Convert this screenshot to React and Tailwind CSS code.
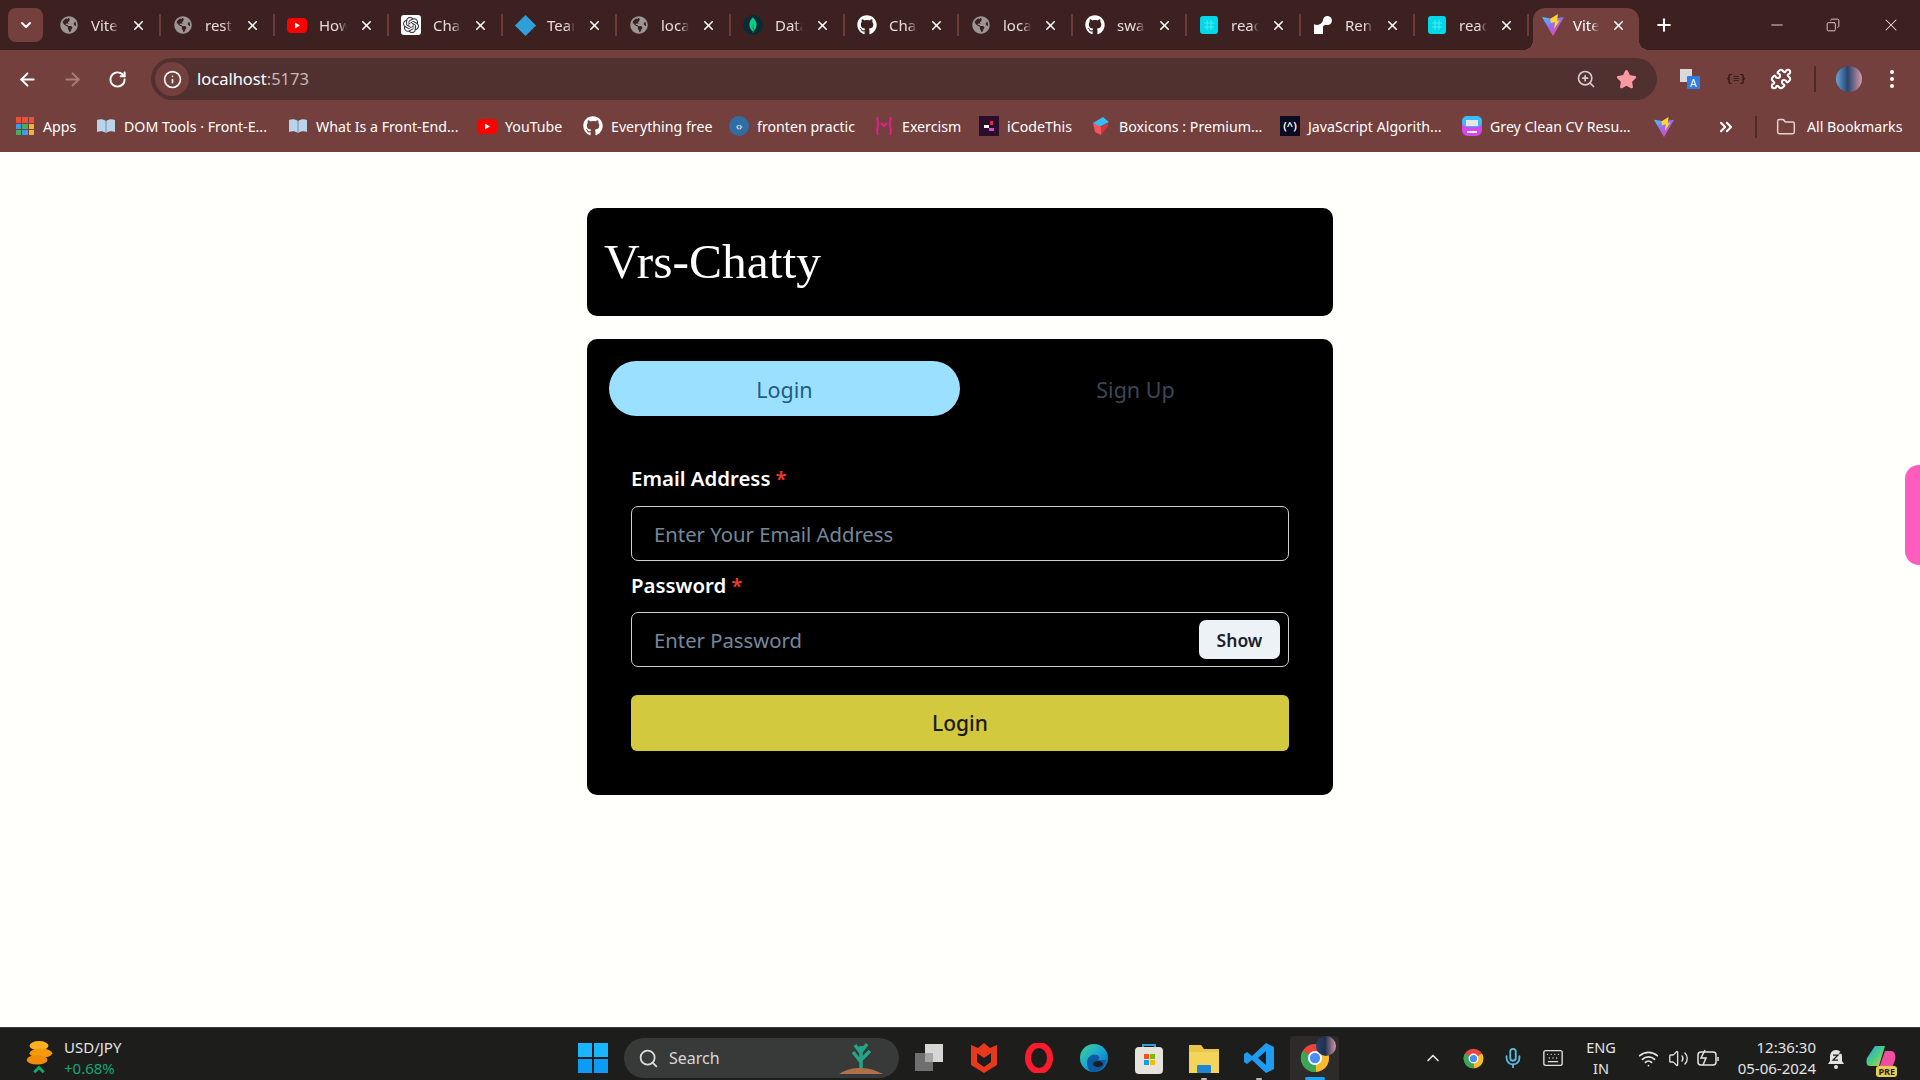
import {
  ArrowLeft,
  ArrowRight,
  RotateCw,
  Info,
  ZoomIn,
  Star,
  Puzzle,
  ChevronDown,
  ChevronUp,
  ChevronsRight,
  Folder,
  Plus,
  Minus,
  X,
  Copy,
  Search,
  Mic,
  Wifi,
  Volume2,
  Keyboard,
} from "lucide-react";
import { FaGithub, FaGlobeAmericas } from "react-icons/fa";
import { SiOpenai, SiMongodb, SiRender } from "react-icons/si";

const Globe = () => <FaGlobeAmericas className="h-[18px] w-[18px] text-[#9b9694]" />;
const Github = ({ size = "h-5 w-5" }) => <FaGithub className={`${size} text-white`} />;

const YouTube = () => (
  <svg viewBox="0 0 20 16" className="h-[17px] w-5">
    <rect width="20" height="15" y="0.5" rx="4" fill="#f00" />
    <path d="M8 5l5 3-5 3z" fill="#fff" />
  </svg>
);

const Vite = ({ size = "h-[24px] w-[24px]" }) => (
  <svg viewBox="0 0 24 24" className={size}>
    <defs>
      <linearGradient id="vitePurple" x1="0" y1="0" x2="0.8" y2="1">
        <stop offset="0" stopColor="#41c8ff" />
        <stop offset="0.5" stopColor="#9a6bf0" />
        <stop offset="1" stopColor="#ff3f9e" />
      </linearGradient>
    </defs>
    <path d="M1 4l11 19L23 4l-6 1-5 1-5-1z" fill="url(#vitePurple)" />
    <path d="M9 6l8-5-1 7 3-1-6 9 1-7-4 1z" fill="#ffd62e" />
  </svg>
);

const ReactTile = () => (
  <svg viewBox="0 0 18 18" className="h-[18px] w-[18px]">
    <rect width="18" height="18" rx="3" fill="#00d8e8" />
    <path d="M7 4v10M11 4v10M4 7h10M4 11h10" stroke="#4de9f3" strokeWidth="1" />
  </svg>
);

const ChromeLogo = ({ size = "h-[30px] w-[30px]" }) => (
  <svg viewBox="0 0 32 32" className={size}>
    <circle cx="16" cy="16" r="15" fill="#e8453c" />
    <path d="M16 16L29 8.5a15 15 0 0 1-12 22.5z" fill="#f5bb2c" />
    <path d="M16 16l1 15A15 15 0 0 1 3 8.5z" fill="#3aa757" />
    <circle cx="16" cy="16" r="6.5" fill="#4a8df6" stroke="#fff" strokeWidth="2" />
  </svg>
);

const tabs = [
  { title: "Vite", icon: <Globe /> },
  { title: "rest", icon: <Globe /> },
  { title: "How", icon: <YouTube /> },
  {
    title: "Cha",
    icon: (
      <span className="flex h-5 w-5 items-center justify-center rounded-[3px] bg-white">
        <SiOpenai className="h-4 w-4 text-[#333]" />
      </span>
    ),
  },
  {
    title: "Tear",
    icon: <span className="h-[15px] w-[15px] rotate-45 bg-[#2f9fd8]" />,
  },
  { title: "loca", icon: <Globe /> },
  {
    title: "Data",
    icon: (
      <span className="flex h-5 w-5 items-center justify-center rounded-full bg-[#0b2a33]">
        <SiMongodb className="h-4 w-4 text-[#13c98a]" />
      </span>
    ),
  },
  { title: "Cha", icon: <Github /> },
  { title: "loca", icon: <Globe /> },
  { title: "swa", icon: <Github /> },
  { title: "reac", icon: <ReactTile /> },
  { title: "Ren", icon: <SiRender className="h-[18px] w-[18px] text-white" /> },
  { title: "reac", icon: <ReactTile /> },
];

const BookIcon = () => (
  <svg viewBox="0 0 20 16" className="h-4 w-5">
    <path d="M1 2c3-1 6-1 9 1 3-2 6-2 9-1v12c-3-1-6-1-9 1-3-2-6-2-9-1z" fill="#b9d3e8" />
    <path d="M10 3v12" stroke="#6d8fae" strokeWidth="1" />
  </svg>
);

const AppsIcon = () => (
  <span className="grid h-[18px] w-[18px] grid-cols-3 gap-px">
    <i className="bg-[#e8503a]" />
    <i className="bg-[#e8503a]" />
    <i className="bg-[#e8503a]" />
    <i className="bg-[#3a9be8]" />
    <i className="bg-[#43b05c]" />
    <i className="bg-[#f2b233]" />
    <i className="bg-[#43b05c]" />
    <i className="bg-[#3a9be8]" />
    <i className="bg-[#f2b233]" />
  </span>
);

const bookmarks = [
  { label: "Apps", width: "w-[34px]", icon: <AppsIcon /> },
  { label: "DOM Tools · Front-E...", width: "w-[145px]", icon: <BookIcon /> },
  { label: "What Is a Front-End...", width: "w-[142px]", icon: <BookIcon /> },
  { label: "YouTube", width: "w-[59px]", icon: <YouTube /> },
  { label: "Everything free", width: "w-[99px]", icon: <Github /> },
  {
    label: "fronten practic",
    width: "w-[98px]",
    icon: (
      <span className="flex h-5 w-5 items-center justify-center rounded-full bg-[#2f6ea5] text-[10px] text-white">
        ‹›
      </span>
    ),
  },
  {
    label: "Exercism",
    width: "w-[58px]",
    icon: (
      <svg viewBox="0 0 20 20" className="h-5 w-5" fill="none" stroke="#e0218a" strokeWidth="2">
        <path d="M4 1c-2 3 1 5 0 9s-2 5 0 9M16 1c2 3-1 5 0 9s2 5 0 9M7 7l3 3 3-3" />
      </svg>
    ),
  },
  {
    label: "iCodeThis",
    width: "w-[65px]",
    icon: (
      <svg viewBox="0 0 20 20" className="h-5 w-5">
        <rect width="20" height="20" fill="#2a0d2c" />
        <rect x="5" y="9" width="5" height="3" fill="#f5f5f5" />
        <rect x="11" y="5" width="3" height="4" fill="#f0264c" />
        <rect x="10" y="12" width="5" height="3" fill="#d74bd0" />
      </svg>
    ),
  },
  {
    label: "Boxicons : Premium...",
    width: "w-[142px]",
    icon: (
      <svg viewBox="0 0 20 20" className="h-5 w-5">
        <path d="M2 7l10-6 6 5-10 5z" fill="#38bdf8" />
        <path d="M2 7l8 4v8l-6-3z" fill="#f2555a" />
        <path d="M10 11l7-4v3l-7 9z" fill="#d9333f" />
      </svg>
    ),
  },
  {
    label: "JavaScript Algorith...",
    width: "w-[135px]",
    icon: (
      <span className="flex h-5 w-5 items-center justify-center bg-[#0a0a23] text-[11px] font-semibold text-white">
        (^)
      </span>
    ),
  },
  {
    label: "Grey Clean CV Resu...",
    width: "w-[142px]",
    icon: (
      <svg viewBox="0 0 20 20" className="h-5 w-5">
        <rect width="20" height="20" rx="6" fill="#d946ef" />
        <rect width="20" height="11" rx="5" fill="#38bdf8" />
        <rect x="4" y="4" width="12" height="6" fill="#e5e7eb" />
        <rect x="5" y="15" width="10" height="2" fill="#fff" />
      </svg>
    ),
  },
];

function Tab({ title, icon }) {
  return (
    <div className="relative flex h-[42px] w-[114px] shrink-0 items-center pb-2">
      <span className="flex w-11 shrink-0 items-center justify-center">{icon}</span>
      <span className="w-[28px] overflow-hidden whitespace-nowrap text-[15px] text-[#e8dcdb] [mask-image:linear-gradient(to_right,black_70%,transparent)]">
        {title}
      </span>
      <X className="ml-[12px] h-[15px] w-[15px] text-white" strokeWidth={2.5} />
      <span className="absolute right-0 top-[6px] h-[22px] w-[2px] bg-[#6d3c3a]" />
    </div>
  );
}

function TabStrip() {
  return (
    <div className="flex h-[50px] shrink-0 items-end bg-[#3d2120]">
      <div className="mb-2 ml-2 mr-[4px] flex h-[34px] w-[35px] shrink-0 items-center justify-center rounded-lg bg-[#74403e]">
        <ChevronDown className="h-4 w-4 text-white" strokeWidth={3} />
      </div>
      <div className="flex h-[42px] items-center">
        {tabs.map((t, i) => (
          <Tab key={i} title={t.title} icon={t.icon} />
        ))}
      </div>
      <div className="relative ml-[4px] flex h-[42px] w-[106px] shrink-0 items-center rounded-t-xl bg-[#74403e] pb-2">
        <span className="absolute bottom-0 left-[-10px] h-[10px] w-[10px] bg-[radial-gradient(circle_at_0_0,transparent_10px,#74403e_10px)]" />
        <span className="absolute bottom-0 right-[-10px] h-[10px] w-[10px] bg-[radial-gradient(circle_at_100%_0,transparent_10px,#74403e_10px)]" />
        <span className="flex w-[40px] shrink-0 items-center justify-center">
          <Vite />
        </span>
        <span className="w-[26px] overflow-hidden whitespace-nowrap text-[15px] text-white [mask-image:linear-gradient(to_right,black_70%,transparent)]">
          Vite
        </span>
        <X className="ml-[12px] h-[15px] w-[15px] text-white" strokeWidth={2.5} />
      </div>
      <div className="flex h-[42px] w-[50px] items-center justify-center pb-2">
        <Plus className="h-5 w-5 text-white" strokeWidth={2.5} />
      </div>
      <div className="flex h-[50px] flex-1 items-center justify-end pr-[19px] text-[#e8dcdb]">
        <Minus className="mr-[40px] h-[18px] w-[18px]" strokeWidth={1.25} />
        <Copy className="mr-[41px] h-[14px] w-[14px] -scale-x-100" strokeWidth={1.5} />
        <X className="h-[20px] w-[20px]" strokeWidth={1.25} />
      </div>
    </div>
  );
}

function Toolbar() {
  return (
    <div className="flex h-[53px] shrink-0 items-center bg-[#74403e] pl-[5px] pt-[5px]">
      <span className="flex w-[45px] justify-center">
        <ArrowLeft className="h-[21px] w-[21px] text-white" strokeWidth={2.25} />
      </span>
      <span className="flex w-[45px] justify-center">
        <ArrowRight className="h-[21px] w-[21px] text-[#a87c7a]" strokeWidth={2.25} />
      </span>
      <span className="flex w-[45px] justify-center">
        <RotateCw className="h-[19px] w-[19px] text-white" strokeWidth={2.5} />
      </span>
      <div className="ml-[11px] flex h-[42px] w-[1506px] items-center rounded-full bg-[#503130] pl-[4px]">
        <span className="flex h-[34px] w-[34px] items-center justify-center rounded-full bg-[#74403e]">
          <Info className="h-[19px] w-[19px] text-white" strokeWidth={2} />
        </span>
        <span className="ml-[8px] text-[16.5px] text-white">
          localhost<span className="text-[#c9b6b5]">:5173</span>
        </span>
        <ZoomIn className="ml-auto h-[20px] w-[20px] text-[#d9c9c8]" strokeWidth={2} />
        <Star className="ml-[20px] mr-[20px] h-[21px] w-[21px] fill-[#fb9aa2] text-[#fb9aa2]" />
      </div>
      <svg viewBox="0 0 22 22" className="ml-[22px] h-[22px] w-[22px] shrink-0">
        <rect x="1" y="1" width="12" height="13" fill="#d9d9d9" />
        <rect x="8" y="8" width="13" height="13" rx="1" fill="#2f7de1" />
        <text x="11" y="19" fontSize="10" fill="#fff" fontFamily="Liberation Sans, sans-serif">
          A
        </text>
      </svg>
      <span className="ml-[25px] w-[20px] text-center font-['Liberation_Mono',monospace] text-[11px] font-bold text-[#2f1a19]">
        {"{≡}"}
      </span>
      <Puzzle className="ml-[24px] h-[22px] w-[22px] text-white" strokeWidth={2.25} />
      <span className="ml-[22px] h-[26px] w-[2px] bg-[#4d2a29]" />
      <span className="ml-[20px] h-[26px] w-[26px] rounded-full bg-[linear-gradient(90deg,#6aa4d8,#27456e_45%,#d79aa8)]" />
      <span className="ml-[28px] flex h-[18px] w-[4px] flex-col justify-between">
        <i className="h-1 w-1 rounded-full bg-white" />
        <i className="h-1 w-1 rounded-full bg-white" />
        <i className="h-1 w-1 rounded-full bg-white" />
      </span>
    </div>
  );
}

function BookmarksBar() {
  return (
    <div className="flex h-[49px] shrink-0 items-center bg-[#74403e] pb-[2px] pl-[15px] text-[14.2px] text-white">
      {bookmarks.map((b) => (
        <div key={b.label} className="mr-[19px] flex shrink-0 items-center">
          <span className="flex w-5 justify-center">{b.icon}</span>
          <span className={`ml-2 whitespace-nowrap ${b.width}`}>{b.label}</span>
        </div>
      ))}
      <Vite size="h-[22px] w-[22px] ml-[2px] shrink-0" />
      <ChevronsRight className="ml-[41px] h-5 w-5 shrink-0" strokeWidth={2.5} />
      <span className="ml-[19px] h-[22px] w-[2px] shrink-0 bg-[#4d2a29]" />
      <Folder className="ml-[19px] h-5 w-5 shrink-0 text-[#e2d3d2]" strokeWidth={1.75} />
      <span className="ml-[11px] whitespace-nowrap">All Bookmarks</span>
    </div>
  );
}

function LoginPage() {
  return (
    <div className="relative flex flex-1 flex-col items-center overflow-hidden bg-[#fffffb] pt-[56px] font-['Noto_Sans',sans-serif]">
      <div className="flex h-[108px] w-[746px] items-center rounded-[10px] bg-black pl-[17px]">
        <h1 className="font-['Liberation_Serif',serif] text-[49.5px] leading-none text-white">Vrs-Chatty</h1>
      </div>

      <div className="mt-[23px] h-[456px] w-[746px] rounded-[10px] bg-black px-[22px] pt-[22px]">
        <div className="flex">
          <button className="h-[55px] flex-1 rounded-full bg-[#9be1ff] pt-[3px] text-[21.5px] text-[#1f5b87]">Login</button>
          <button className="h-[55px] flex-1 pt-[3px] text-[21.5px] text-[#3c4658]">Sign Up</button>
        </div>

        <div className="px-[22px] pt-[49px]">
          <label className="flex h-[28px] items-center pb-[1px] text-[20.4px] font-semibold leading-none text-white">
            Email Address<span className="ml-[5px] text-[#f23a2a]">*</span>
          </label>
          <div className="mt-[13px] flex h-[55px] items-center rounded-[7px] border border-[#cfcfcf] px-[22px] pt-[1px] text-[20.3px] text-[#76889a]">
            Enter Your Email Address
          </div>

          <label className="mt-[10px] flex h-[28px] items-center pt-[1px] text-[20.4px] font-semibold leading-none text-white">
            Password<span className="ml-[5px] text-[#f23a2a]">*</span>
          </label>
          <div className="mt-[13px] flex h-[55px] items-center justify-between rounded-[7px] border border-[#cfcfcf] pl-[22px] pr-[8px] text-[20.3px] text-[#76889a]">
            <span className="pt-[2px]">Enter Password</span>
            <button className="h-[39px] w-[81px] rounded-[7px] bg-[#edf2f7] pt-[1px] text-[17.5px] font-semibold text-[#1a202c]">
              Show
            </button>
          </div>

          <button className="mt-[28px] h-[56px] w-full rounded-[6px] bg-[#d2c93e] pt-[2px] text-[21px] font-medium text-[#1a1a12]">
            Login
          </button>
        </div>
      </div>

      {/* side widget peeking in from the edge */}
      <div className="absolute right-0 top-[313px] h-[100px] w-[15px] rounded-l-[14px] bg-[#ff5cc0]" />
    </div>
  );
}

function TaskbarIcons() {
  return (
    <div className="ml-[2px] flex h-full items-center">
      <span className="flex w-[55px] justify-center">
        <svg viewBox="0 0 30 30" className="h-[30px] w-[30px]">
          <rect x="11" y="1" width="18" height="18" fill="#d6d6d6" />
          <rect x="1" y="10" width="18" height="18" fill="#6f6f6f" />
          <rect x="11" y="10" width="8" height="9" fill="#a6a6a6" />
        </svg>
      </span>
      <span className="flex w-[55px] justify-center">
        <svg viewBox="0 0 28 32" className="h-[32px] w-[28px]">
          <path d="M1 3l7 3 6-5 6 5 7-3v20l-13 8-13-8z" fill="#e8391d" />
          <path d="M7 11l7 5 7-5v9l-7 5-7-5z" fill="#1c1c1c" />
        </svg>
      </span>
      <span className="flex w-[55px] justify-center">
        <svg viewBox="0 0 30 30" className="h-[30px] w-[30px]">
          <ellipse cx="15" cy="15" rx="11" ry="13" fill="none" stroke="#ff1b2d" strokeWidth="6" />
        </svg>
      </span>
      <span className="flex w-[55px] justify-center">
        <svg viewBox="0 0 30 30" className="h-[30px] w-[30px]">
          <defs>
            <linearGradient id="edgeFill" x1="0" y1="0" x2="1" y2="1">
              <stop offset="0" stopColor="#3bd68b" />
              <stop offset="0.5" stopColor="#1aa6d6" />
              <stop offset="1" stopColor="#0a5fb4" />
            </linearGradient>
          </defs>
          <circle cx="15" cy="15" r="14" fill="url(#edgeFill)" />
          <path d="M8 20c0-6 5-10 10-8 3 1 3 4 1 5h8c-1 6-6 12-13 12-4 0-6-5-6-9z" fill="#0c59a4" />
          <ellipse cx="19" cy="21" rx="5" ry="3" fill="#1c1c1c" />
        </svg>
      </span>
      <span className="flex w-[55px] justify-center">
        <svg viewBox="0 0 28 32" className="h-[32px] w-[28px]">
          <path d="M8 6V3h12v3" fill="none" stroke="#2aa0dc" strokeWidth="2" />
          <rect y="5" width="28" height="27" rx="4" fill="#e6e2dc" />
          <rect x="9" y="12" width="5" height="5" fill="#f25022" />
          <rect x="15" y="12" width="5" height="5" fill="#7fba00" />
          <rect x="9" y="18" width="5" height="5" fill="#00a4ef" />
          <rect x="15" y="18" width="5" height="5" fill="#ffb900" />
        </svg>
      </span>
      <span className="relative flex h-full w-[55px] items-center justify-center">
        <svg viewBox="0 0 32 32" className="h-[32px] w-[32px]">
          <path d="M1 3h12l3 4h15v24H1z" fill="#e9c54a" />
          <path d="M1 10h30v21H1z" fill="#f4d55c" />
          <rect x="9" y="23" width="14" height="8" rx="1" fill="#1f86d4" />
        </svg>
        <span className="absolute bottom-0 h-[2px] w-[6px] rounded-full bg-[#b8b8b8]" />
      </span>
      <span className="relative flex h-full w-[55px] items-center justify-center">
        <svg viewBox="0 0 32 32" className="h-[32px] w-[32px]">
          <path d="M23 1l8 4v22l-8 4-14-13-5 4-3-2V12l3-2 5 4zM23 9l-8 7 8 7z" fill="#1f9cf0" fillRule="evenodd" />
        </svg>
        <span className="absolute bottom-0 h-[2px] w-[6px] rounded-full bg-[#b8b8b8]" />
      </span>
      <span className="relative ml-[4px] flex h-full w-[49px] items-center justify-center rounded-t-[4px] bg-[#2c2b29]">
        <ChromeLogo />
        <span className="absolute right-[3px] top-[0px] h-[20px] w-[20px] rounded-full bg-[linear-gradient(90deg,#27456e,#1e2f4d_45%,#d79aa8)]" />
        <span className="absolute bottom-0 h-[3px] w-[20px] rounded-full bg-[#1aa6ff]" />
      </span>
    </div>
  );
}

function Taskbar() {
  return (
    <div className="flex h-[53px] shrink-0 items-center border-t border-[#3a3a3a] bg-[#1d1e1c] pt-[8px] font-['Noto_Sans',sans-serif] text-[#e4e4e4]">
      {/* ticker widget */}
      <div className="flex w-[578px] shrink-0 items-center pl-[25px]">
        <svg viewBox="0 0 28 36" className="h-[34px] w-[28px] shrink-0">
          <ellipse cx="14" cy="5" rx="10" ry="5" fill="#ffb020" />
          <ellipse cx="16" cy="13" rx="12" ry="5" fill="#f59a0c" />
          <ellipse cx="12" cy="20" rx="11" ry="5" fill="#f08c06" />
          <path d="M9 33l5-5 5 5" fill="none" stroke="#0fa968" strokeWidth="3" />
        </svg>
        <div className="ml-[11px] text-[15px] leading-[21px]">
          <div>USD/JPY</div>
          <div className="text-[#12a578]">+0.68%</div>
        </div>
      </div>

      <div className="grid h-[30px] w-[30px] shrink-0 grid-cols-2 gap-[2px]">
        <i className="bg-[#19b6ff]" />
        <i className="bg-[#19b6ff]" />
        <i className="bg-[#0d9cf5]" />
        <i className="bg-[#0d9cf5]" />
      </div>

      <div className="ml-[16px] flex h-[40px] w-[275px] shrink-0 items-center rounded-full bg-[#373a38] pl-[14px]">
        <Search className="h-[21px] w-[21px] text-[#dcdcdc]" strokeWidth={2} />
        <span className="ml-[10px] text-[16px] text-[#d8d8d8]">Search</span>
        <svg viewBox="0 0 48 36" className="ml-auto mr-[14px] h-[36px] w-[48px]">
          <path d="M24 30V6M24 22l-8-10M24 20l9-9M24 13l-6-8M24 12l6-8" stroke="#24a585" strokeWidth="3.5" fill="none" />
          <path d="M2 34c8-5 14-6 22-6s14 2 22 6z" fill="#b0714a" />
        </svg>
      </div>

      <TaskbarIcons />

      <div className="ml-[74px] flex h-full flex-1 items-center">
        <span className="flex w-[40px] justify-center">
          <ChevronUp className="h-[20px] w-[20px] text-[#e4e4e4]" strokeWidth={2} />
        </span>
        <span className="flex w-[40px] justify-center">
          <ChromeLogo size="h-[21px] w-[21px]" />
        </span>
        <span className="flex w-[40px] justify-center">
          <Mic className="h-[22px] w-[22px] text-[#5fb8de]" strokeWidth={2} />
        </span>
        <span className="flex w-[40px] justify-center">
          <Keyboard className="h-[22px] w-[22px] text-[#dedede]" strokeWidth={1.5} />
        </span>
        <div className="w-[56px] text-center text-[14.5px] leading-[21px]">
          ENG
          <br />
          IN
        </div>
        <span className="ml-[4px] flex w-[30px] justify-center">
          <Wifi className="h-[21px] w-[21px]" strokeWidth={2} />
        </span>
        <span className="flex w-[30px] justify-center">
          <Volume2 className="h-[21px] w-[21px]" strokeWidth={1.5} />
        </span>
        <span className="flex w-[30px] justify-center">
          <svg viewBox="0 0 24 18" className="h-[18px] w-[24px]" fill="none" stroke="#e4e4e4" strokeWidth="1.5">
            <rect x="2" y="3" width="18" height="13" rx="3" />
            <path d="M22 8v4" />
            <path d="M9 1L5 9h5l-3 7" />
          </svg>
        </span>
        <div className="w-[93px] text-right text-[15px] leading-[21px]">
          12:36:30
          <br />
          05-06-2024
        </div>
        <span className="flex w-[40px] justify-center">
          <svg viewBox="0 0 20 22" className="h-[22px] w-[20px]">
            <path d="M10 3c4 0 6 3 6 7v4l2 3H2l2-3v-4c0-4 2-7 6-7z" fill="#e4e4e4" />
            <circle cx="10" cy="20" r="2" fill="#e4e4e4" />
            <path d="M7 8h5l-5 5h5M14 2h4l-4 4h4" stroke="#1d1e1c" strokeWidth="1.25" fill="none" />
          </svg>
        </span>
        <span className="relative ml-[5px] flex w-[40px] justify-center">
          <svg viewBox="0 0 30 30" className="h-[34px] w-[30px]">
            <defs>
              <linearGradient id="copilotFill" x1="0" y1="0" x2="1" y2="1">
                <stop offset="0" stopColor="#2f9bf0" />
                <stop offset="0.55" stopColor="#4bd27a" />
                <stop offset="1" stopColor="#ffb657" />
              </linearGradient>
            </defs>
            <path d="M9 3h10l-6 20H4c-4 0-4-5-3-8z" fill="url(#copilotFill)" />
            <path d="M19 8h6c4 0 5 5 4 9l-3 8H13z" fill="#f04fa0" />
          </svg>
          <span className="absolute bottom-[-2px] right-[4px] rounded-[3px] bg-[#e9cf54] px-[2px] text-[9px] font-bold leading-[11px] text-[#222]">
            PRE
          </span>
        </span>
      </div>
    </div>
  );
}

export default function App() {
  return (
    <div className="flex h-screen w-full flex-col overflow-hidden bg-[#fffffb] font-['Noto_Sans',sans-serif]">
      <TabStrip />
      <Toolbar />
      <BookmarksBar />
      <LoginPage />
      <Taskbar />
    </div>
  );
}
